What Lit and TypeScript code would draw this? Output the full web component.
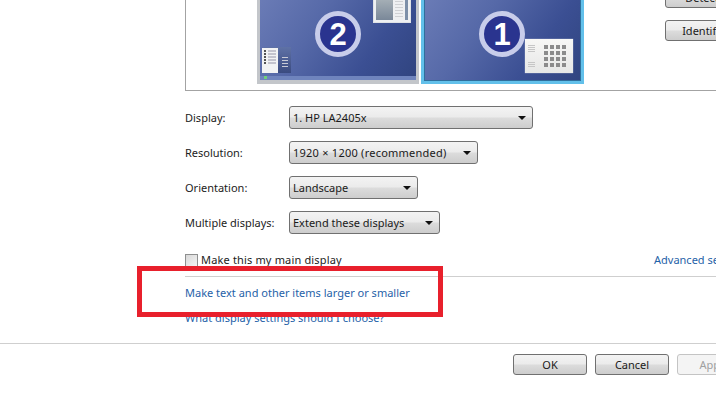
import { LitElement, html, css } from "lit";
import { customElement } from "lit/decorators.js";

@customElement("app-root")
export class AppRoot extends LitElement {
  static styles = css`
    :host { display: block; }
    .root {
      position: relative; width: 716px; height: 408px; overflow: hidden; background: #fff;
      font-family: "Noto Sans", sans-serif; font-size: 11px; color: #1c1c1c;
    }
    .main { padding-left: 185px; }
    .preview {
      position: relative; box-sizing: border-box; width: 560px; height: 91px;
      border-left: 1px solid #a3a3a3; border-bottom: 1px solid #a3a3a3;
      display: flex; flex-direction: column; justify-content: flex-end; align-items: flex-start;
      gap: 12px; padding: 0 0 49px 479px;
    }
    .btn {
      box-sizing: border-box; flex: none; width: 74px; height: 21px; display: flex; align-items: center; justify-content: center;
      border: 1px solid #707070; border-radius: 3px; color: #1a1a1a;
      background: linear-gradient(#f3f3f3 0%, #ebebeb 48%, #dcdcdc 52%, #cdcdcd 100%);
    }
    .btn.disabled { color: #a0a0a0; border-color: #c4c4c4; background: #f4f4f4; }
    .monitor {
      position: absolute; box-sizing: border-box; top: -60px; height: 144px;
      background: linear-gradient(125deg, #7686be 0%, #5669a8 45%, #3b4f93 75%, #30447f 100%);
    }
    .m2 { left: 71px; width: 162px; border: 3px solid #c3c6ca; border-bottom-width: 4px; border-top: 0; }
    .m1 { left: 235px; width: 163px; border: 3px solid #62c0ea; border-top: 0; outline: 1px solid #2f6f9c; outline-offset: -4px; }
    .badge {
      position: absolute; box-sizing: border-box; top: 71px; width: 46px; height: 46px; border-radius: 50%;
      border: 5px solid #c8cdea; background: #2a348f; color: #fff;
      display: flex; align-items: center; justify-content: center;
      font: bold 31px/1 "Liberation Sans", sans-serif;
    }
    .m2 .badge { left: 55px; }
    .m1 .badge { left: 55px; }
    .taskbar { position: absolute; left: 0; right: 0; bottom: 0; height: 4px; background: #6f84bd; }
    .orb { position: absolute; left: 4px; top: 0; width: 3px; height: 3px; background: #6fcf7a; }
    .win {
      position: absolute; box-sizing: border-box; left: 113px; top: 59px; width: 38px; height: 24px; display: flex; gap: 2px;
      background: #eef0f2; border: 1px solid #dfe2e6; padding: 0 2px 2px;
    }
    .win-pane { width: 17px; background: linear-gradient(#a4aeb5, #7a8899); }
    .win-lines { flex: 1; display: flex; flex-direction: column; gap: 2px; padding-top: 1px; }
    .win-line { height: 1px; background: #cfd1d4; }
    .win-bar { width: 3px; background: #7c8fa8; }
    .menu-back {
      position: absolute; left: 4px; top: 107px; width: 27px; height: 26px;
      background: linear-gradient(#5f72a6, #3a4b80);
    }
    .menu {
      position: absolute; box-sizing: border-box; left: 2px; top: 108px; width: 16px; height: 25px; background: #f2f3f4;
      padding: 2px 2px; display: flex; flex-direction: column; gap: 1.5px;
    }
    .menu-line { height: 1.5px; background: linear-gradient(90deg, #555 0 2px, transparent 2px 4px, #c4c4ce 4px); }
    .menu-bars {
      position: absolute; left: 22px; top: 117px; width: 6px; display: flex; flex-direction: column; gap: 2px;
    }
    .menu-bar { height: 1px; background: #c8cad6; }
    .tile {
      position: absolute; box-sizing: border-box; left: 101px; top: 99px; width: 48px; height: 34px;
      background: linear-gradient(#f7f7f5, #e6e7e6); display: flex; gap: 8px; padding: 6px 3px;
      box-shadow: 0 0 1px #d0d4e0;
    }
    .tile-lines { width: 7px; display: flex; flex-direction: column; gap: 1px; }
    .tile-line { height: 1px; background: #c6c6c6; }
    .tile-gap { height: 8px; }
    .grid { display: grid; grid-template-columns: repeat(4, 4px); grid-auto-rows: 4px; gap: 2px; margin-left: 1px; }
    .cell { background: #8b8b8b; }
    .form {
      display: grid; grid-template-columns: 104px max-content; row-gap: 12px; align-items: center; justify-items: start;
      padding-top: 15px;
    }
    .select {
      box-sizing: border-box; height: 23px; display: flex; align-items: center; justify-content: space-between;
      padding: 0 6px 0 3px; border: 1px solid #707070; border-radius: 3px; color: #1a1a1a;
      background: linear-gradient(#f3f3f3 0%, #ebebeb 48%, #dcdcdc 52%, #cdcdcd 100%);
    }
    .arrow { width: 0; height: 0; border: 4px solid transparent; border-top: 4px solid #111; border-bottom: 0; }
    .w-display { width: 244px; } .w-res { width: 189px; } .w-orient { width: 129px; } .w-multi { width: 151px; }
    .wide { letter-spacing: 0.24px; }
    .check-row { display: flex; align-items: center; height: 14px; margin-top: 19px; padding-bottom: 1px; }
    .check-main { flex: none; width: 469px; display: flex; align-items: center; }
    .check {
      box-sizing: border-box; width: 13px; height: 13px; border: 1px solid #8e8f8f; margin-right: 3px;
      background: linear-gradient(135deg, #d8d8d8, #f4f4f4);
    }
    .check-label { padding-bottom: 1px; letter-spacing: 0.16px; }
    .adv { flex: none; color: #1f62a8; padding-bottom: 2px; }
    .rule { height: 1px; background: #cfcfcf; }
    .main > .rule { margin-top: 8px; }
    .link { color: #1f62a8; display: block; height: 18px; line-height: 18px; }
    .link.first { margin-top: 7px; }
    .link.second { margin-top: 7px; }
    .foot-rule { margin-top: 16px; }
    .foot { display: flex; gap: 8px; padding: 10px 0 0 513px; }
    .callout {
      position: absolute; box-sizing: border-box; left: 137px; top: 266px; width: 306px; height: 51px;
      border: 5px solid #e8202c;
    }
  `;

  private range(n: number) { return Array.from({ length: n }); }

  render() {
    return html`
      <div class="root">
        <div class="main">
          <div class="preview">
            <div class="monitor m2">
              <div class="win">
                <div class="win-pane"></div>
                <div class="win-lines">${this.range(6).map(() => html`<div class="win-line"></div>`)}</div>
                <div class="win-bar"></div>
              </div>
              <div class="badge">2</div>
              <div class="menu-back"></div>
              <div class="menu">${this.range(5).map(() => html`<div class="menu-line"></div>`)}</div>
              <div class="menu-bars">${this.range(4).map(() => html`<div class="menu-bar"></div>`)}</div>
              <div class="taskbar"><div class="orb"></div></div>
            </div>
            <div class="monitor m1">
              <div class="badge">1</div>
              <div class="tile">
                <div class="tile-lines">
                  ${this.range(4).map(() => html`<div class="tile-line"></div>`)}
                  <div class="tile-gap"></div>
                  ${this.range(3).map(() => html`<div class="tile-line"></div>`)}
                </div>
                <div class="grid">${this.range(16).map(() => html`<div class="cell"></div>`)}</div>
              </div>
            </div>
            <div class="btn">Detect</div>
            <div class="btn">Identify</div>
          </div>
          <div class="form">
            <div>Display:</div>
            <div class="select w-display"><span>1. HP LA2405x</span><span class="arrow"></span></div>
            <div>Resolution:</div>
            <div class="select w-res"><span class="wide">1920 × 1200 (recommended)</span><span class="arrow"></span></div>
            <div>Orientation:</div>
            <div class="select w-orient"><span>Landscape</span><span class="arrow"></span></div>
            <div>Multiple displays:</div>
            <div class="select w-multi"><span>Extend these displays</span><span class="arrow"></span></div>
          </div>
          <div class="check-row">
            <div class="check-main"><div class="check"></div><span class="check-label">Make this my main display</span></div>
            <span class="adv">Advanced settings</span>
          </div>
          <div class="rule"></div>
          <a class="link first">Make text and other items larger or smaller</a>
          <a class="link second">What display settings should I choose?</a>
        </div>
        <div class="rule foot-rule"></div>
        <div class="foot">
          <div class="btn">OK</div>
          <div class="btn">Cancel</div>
          <div class="btn disabled">Apply</div>
        </div>
        <div class="callout"></div>
      </div>
    `;
  }
}
